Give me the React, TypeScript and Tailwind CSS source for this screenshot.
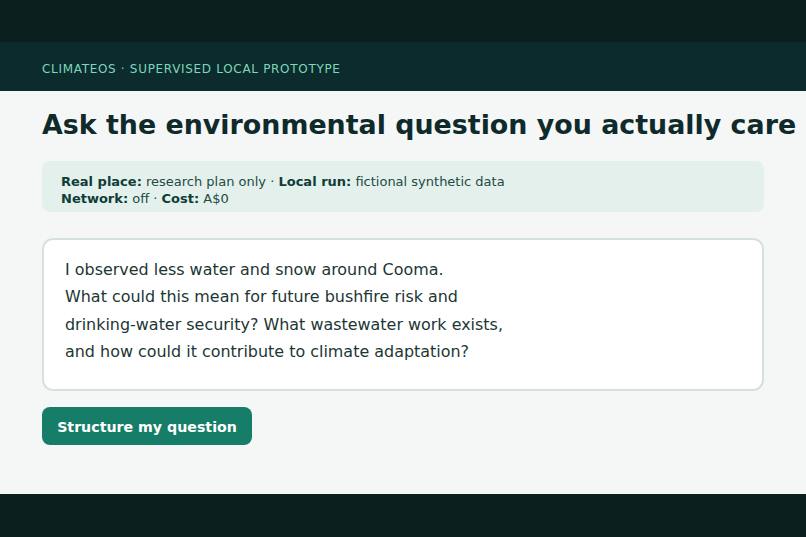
import React from 'react';

const App: React.FC = () => {
    return (
        <div className="min-h-[537px] bg-[#0b1f1f] pt-[42px] pb-[43px] font-['DejaVu_Sans',sans-serif] overflow-hidden">
            <header className="h-[49px] bg-[#0b2b2c] px-[42px] pt-[4px] flex items-center text-[12px] tracking-[0.057em] text-[#7fd6bd]">
                CLIMATEOS · SUPERVISED LOCAL PROTOTYPE
            </header>
            <main className="h-[403px] bg-[#f4f7f6] px-[42px] pt-[16px]">
                <h1 className="text-[26.86px] leading-[36px] font-bold text-[#0f2a2b] whitespace-nowrap">
                    Ask the environmental question you actually care
                </h1>
                <div className="mt-[18px] h-[51px] rounded-[8px] bg-[#e4f0ec] px-[19px] pt-[12px] text-[13px] leading-[17px] text-[#1d4a45]">
                    <p><strong className="text-[#0f3d38]">Real place:</strong> research plan only · <strong className="text-[#0f3d38]">Local run:</strong> fictional synthetic data</p>
                    <p><strong className="text-[#0f3d38]">Network:</strong> off · <strong className="text-[#0f3d38]">Cost:</strong> A$0</p>
                </div>
                <div className="mt-[26px] h-[153px] rounded-[11px] border-2 border-[#d5e1de] bg-white px-[21px] py-[16px] text-[15.95px] leading-[27.4px] text-[#1c3634]">
                    <p>I observed less water and snow around Cooma.</p>
                    <p>What could this mean for future bushfire risk and</p>
                    <p>drinking-water security? What wastewater work exists,</p>
                    <p>and how could it contribute to climate adaptation?</p>
                </div>
                <button className="mt-[16px] h-[38px] w-[210px] rounded-[8px] bg-[#167d68] pt-[3px] text-[14.2px] font-bold text-white">
                    Structure my question
                </button>
            </main>
        </div>
    );
};

export default App;
